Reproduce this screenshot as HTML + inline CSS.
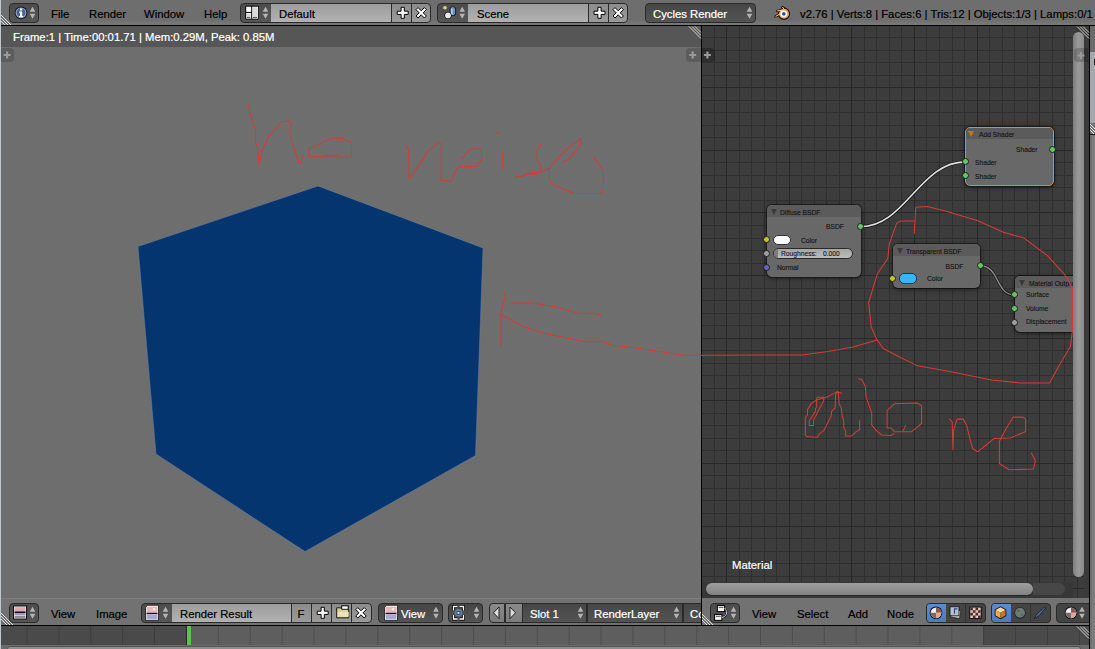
<!DOCTYPE html>
<html><head><meta charset="utf-8">
<style>
*{box-sizing:border-box;margin:0;padding:0}
html,body{width:1095px;height:649px;overflow:hidden;background:#727272;font-family:"Liberation Sans",sans-serif;font-size:11.3px;color:#000}
.a{position:absolute}
.t{position:absolute;white-space:nowrap;line-height:1;-webkit-text-stroke:0.2px currentColor}
.menu{position:absolute;border-radius:4px;background:linear-gradient(#4c4c4c,#555);border:1px solid #2a2a2a}
.fld{position:absolute;background:linear-gradient(#9d9d9d,#b2b2b2);border-top:1px solid #2a2a2a;border-bottom:1px solid #2a2a2a}
.btn{position:absolute;background:linear-gradient(#8c8c8c,#9a9a9a);border:1px solid #2a2a2a}
.dk{position:absolute;border-radius:4px;background:linear-gradient(#464646,#545454);border:1px solid #2a2a2a;color:#fff}
</style></head><body>

<!-- left strip -->
<div class="a" style="left:0;top:0;width:1px;height:649px;background:#bfc6cc"></div>

<!-- ===== TOP HEADER ===== -->
<div class="a" style="left:1px;top:0;width:1094px;height:25px;background:linear-gradient(#6e6e6e 0,#6e6e6e 20px,#787878 24px)"></div>
<div class="a" style="left:1px;top:25px;width:1094px;height:1px;background:#000"></div>

<!-- info editor menu button -->
<div class="menu" style="left:9px;top:3px;width:30px;height:20px"></div>
<div class="t" style="left:51px;top:9px">File</div>
<div class="t" style="left:89px;top:9px">Render</div>
<div class="t" style="left:144px;top:9px">Window</div>
<div class="t" style="left:204px;top:9px">Help</div>

<!-- layout -->
<div class="menu" style="left:240px;top:3px;width:36px;height:20px;border-radius:4px 0 0 4px"></div>
<div class="fld" style="left:271px;top:3px;width:121px;height:20px"></div>
<div class="t" style="left:279px;top:9px">Default</div>
<div class="btn" style="left:391px;top:3px;width:21px;height:20px"></div>
<div class="btn" style="left:411px;top:3px;width:20px;height:20px;border-radius:0 4px 4px 0"></div>

<!-- scene -->
<div class="menu" style="left:437px;top:3px;width:36px;height:20px;border-radius:4px 0 0 4px"></div>
<div class="fld" style="left:468px;top:3px;width:121px;height:20px"></div>
<div class="t" style="left:477px;top:9px">Scene</div>
<div class="btn" style="left:588px;top:3px;width:21px;height:20px"></div>
<div class="btn" style="left:608px;top:3px;width:20px;height:20px;border-radius:0 4px 4px 0"></div>

<!-- render engine -->
<div class="dk" style="left:645px;top:3px;width:111px;height:20px"></div>
<div class="t" style="left:653px;top:9px;color:#fff">Cycles Render</div>

<div class="t" style="left:800px;top:9px">v2.76 | Verts:8 | Faces:6 | Tris:12 | Objects:1/3 | Lamps:0/1</div>

<svg class="a" style="left:0;top:0" width="1095" height="26">
 <defs>
  <g id="ud"><path d="M-2.8,-1 L0,-6 L2.8,-1Z M-2.8,1 L0,6 L2.8,1Z" fill="#b4b4b4"/></g>
  <g id="plus"><path d="M-1.6,-5.5 h3.2 v3.9 h3.9 v3.2 h-3.9 v3.9 h-3.2 v-3.9 h-3.9 v-3.2 h3.9Z" fill="#fff" stroke="#000" stroke-width="1"/></g>
  <g id="cross"><path d="M-5.2,-3.2 L-3.2,-5.2 L0,-2 L3.2,-5.2 L5.2,-3.2 L2,0 L5.2,3.2 L3.2,5.2 L0,2 L-3.2,5.2 L-5.2,3.2 L-2,0Z" fill="#fff" stroke="#000" stroke-width="1"/></g>
 </defs>
 <!-- info icon -->
 <circle cx="21" cy="12.8" r="6.4" fill="#10182a"/>
 <circle cx="21" cy="12.8" r="5.4" fill="#a8b8d0"/>
 <circle cx="21" cy="12.8" r="4.5" fill="#46648f"/>
 <rect x="20" y="8.5" width="2.2" height="2" fill="#fff"/>
 <path d="M19.2,11.5 h3 v4.4 h1 v1.2 h-4.2 v-1.2 h1 v-3.2 h-0.8Z" fill="#fff"/>
 <use href="#ud" x="32.5" y="12.8"/>
 <!-- layout icon -->
 <rect x="245.3" y="5.8" width="13.6" height="13.8" rx="1" fill="#000"/>
 <rect x="246.2" y="6.7" width="5" height="5.2" fill="#fafafa"/>
 <rect x="246.2" y="12.9" width="5" height="5.8" fill="#f4f4f4"/>
 <rect x="252.2" y="6.7" width="5.9" height="12" fill="#f4f4f4"/>
 <rect x="252.9" y="7.4" width="4.5" height="9.6" fill="#d8d8d8"/>
 <rect x="246.9" y="13.6" width="3.6" height="3.4" fill="#d8d8d8"/>
 <rect x="247" y="17.2" width="3.2" height="0.8" fill="#333"/>
 <rect x="253" y="17.2" width="4.2" height="0.8" fill="#333"/>
 <use href="#ud" x="265.5" y="12.8"/>
 <use href="#plus" x="402.7" y="12.8"/>
 <use href="#cross" x="421.2" y="12.8"/>
 <!-- scene icon -->
 <circle cx="445" cy="7.8" r="1.8" fill="#e8e890" opacity=".9"/>
 <rect x="449.6" y="6.4" width="6.4" height="9.6" rx="3" fill="#101010"/>
 <rect x="450.4" y="7" width="4.8" height="8.4" rx="2.4" fill="#7090c8"/>
 <rect x="451" y="8.6" width="1.6" height="6" fill="#b8cce8"/>
 <circle cx="448" cy="15.4" r="3.6" fill="#101010"/>
 <circle cx="448" cy="15.4" r="2.9" fill="#e8e8e8"/>
 <use href="#ud" x="462.2" y="12.8"/>
 <use href="#plus" x="599.5" y="12.8"/>
 <use href="#cross" x="618.2" y="12.8"/>
 <use href="#ud" x="749.5" y="12.8"/>
 <!-- blender logo -->
 <g stroke="#22140a" stroke-width="1.1" stroke-linejoin="round" fill="#e4a060">
  <path d="M787.5,9.5 L782.6,6.4 L781.6,7.4 L783,9.8 L777,10.2 L776.4,11.2 L780.6,12.4 L774.8,16.2 L775,17.2 L781,15.5Z"/>
  <circle cx="784" cy="13.8" r="5.6"/>
 </g>
 <path d="M777.2,10.8 L782.5,10.2 M775.6,16.5 L780.5,13.4 M782.3,7.3 L784,9" stroke="#f4d0a8" stroke-width=".9"/>
 <circle cx="783.8" cy="13.8" r="3.4" fill="#fff"/>
 <circle cx="783.8" cy="13.8" r="1.9" fill="#3a5590"/>
</svg>

<!-- ===== IMAGE EDITOR ===== -->
<div class="a" style="left:1px;top:26px;width:700px;height:21px;background:#565656"></div>
<div class="t" style="left:13px;top:32px;color:#fff">Frame:1 | Time:00:01.71 | Mem:0.29M, Peak: 0.85M</div>
<div class="a" style="left:1px;top:47px;width:700px;height:552px;background:#6e6e6e"></div>

<svg class="a" style="left:0;top:0" width="1095" height="649">
  <polygon points="318,186 483,248 475.5,455.5 305,551.5 156,454 138,246.5" fill="#04356f" stroke="rgba(110,135,170,.45)" stroke-width="1" stroke-linejoin="miter"/>
</svg>

<!-- divider -->
<div class="a" style="left:701px;top:26px;width:1px;height:599px;background:#000"></div>

<!-- ===== NODE EDITOR ===== -->
<div class="a" style="left:702px;top:26px;width:387px;height:572px;background:#3c3c3c"></div>
<svg class="a" style="left:0;top:0" width="1095" height="649" shape-rendering="crispEdges">
 <path d="M714.5,26V598M739.5,26V598M751.5,26V598M764.5,26V598M776.5,26V598M801.5,26V598M814.5,26V598M826.5,26V598M839.5,26V598M864.5,26V598M876.5,26V598M889.5,26V598M901.5,26V598M926.5,26V598M939.5,26V598M952.5,26V598M964.5,26V598M989.5,26V598M1002.5,26V598M1014.5,26V598M1027.5,26V598M1052.5,26V598M1064.5,26V598M1077.5,26V598M702,37.5H1089M702,50.5H1089M702,62.5H1089M702,75.5H1089M702,100.5H1089M702,112.5H1089M702,125.5H1089M702,137.5H1089M702,162.5H1089M702,175.5H1089M702,187.5H1089M702,200.5H1089M702,225.5H1089M702,238.5H1089M702,250.5H1089M702,263.5H1089M702,288.5H1089M702,300.5H1089M702,313.5H1089M702,325.5H1089M702,350.5H1089M702,363.5H1089M702,375.5H1089M702,388.5H1089M702,413.5H1089M702,425.5H1089M702,438.5H1089M702,450.5H1089M702,475.5H1089M702,488.5H1089M702,500.5H1089M702,513.5H1089M702,538.5H1089M702,551.5H1089M702,563.5H1089M702,576.5H1089" stroke="#2f2f2f" stroke-width="1"/>
 <path d="M726.5,26V598M789.5,26V598M851.5,26V598M914.5,26V598M977.5,26V598M1039.5,26V598M702,87.5H1089M702,150.5H1089M702,212.5H1089M702,275.5H1089M702,338.5H1089M702,400.5H1089M702,463.5H1089M702,526.5H1089M702,588.5H1089" stroke="#282828" stroke-width="1"/>
</svg>
<div class="a" style="left:1084px;top:26px;width:5px;height:572px;background:#3a3a3a"></div>


<!-- nodes -->
<style>
.node{position:absolute;background:#686868;border-radius:5px;box-shadow:0 0 0 1px rgba(0,0,0,.35),0 1px 5px rgba(0,0,0,.6);overflow:hidden}
.nh{position:absolute;left:0;top:0;right:0;background:#5b5b5b}
.nt{position:absolute;white-space:nowrap;line-height:1;font-size:6.7px;margin-top:0.6px;color:#111;-webkit-text-stroke:0.1px #111}
.sock{position:absolute;width:7px;height:7px;border-radius:50%;border:1px solid #1e1e1e;margin:-0.5px 0 0 -0.5px}
.tri{position:absolute;width:0;height:0;border-left:3.5px solid transparent;border-right:3.5px solid transparent;border-top:6px solid #3a3a3a}
</style>
<svg class="a" style="left:0;top:0" width="1095" height="649">
  <path d="M860.7,226.7 C905,226.7 920,161.9 965.2,161.9" stroke="#1a1a1a" stroke-width="3.2" fill="none"/>
  <path d="M860.7,226.7 C905,226.7 920,161.9 965.2,161.9" stroke="#e0e0e0" stroke-width="1.6" fill="none"/>
  <path d="M980,265.7 C1000,265.7 995,294.9 1014.7,294.9" stroke="#1a1a1a" stroke-width="3" fill="none"/>
  <path d="M980,265.7 C1000,265.7 995,294.9 1014.7,294.9" stroke="#8a8a8a" stroke-width="1.4" fill="none"/>
</svg>

<div class="node" style="left:767px;top:205px;width:94px;height:72px">
  <div class="nh" style="height:12px"></div>
</div>
<div class="tri" style="left:771px;top:209px"></div>
<div class="nt" style="left:780px;top:209px">Diffuse BSDF</div>
<div class="nt" style="left:826px;top:223.5px">BSDF</div>
<div class="a" style="left:772.7px;top:234.8px;width:18px;height:10.6px;border-radius:5px;background:#fafafe;border:1px solid #333"></div>
<div class="nt" style="left:801px;top:237px">Color</div>
<div class="a" style="left:772.7px;top:248.3px;width:80px;height:11px;border-radius:5.5px;background:linear-gradient(#a6a6a6,#bcbcbc);border:1px solid #2a2a2a"></div>
<div class="a" style="left:774px;top:249.3px;width:4px;height:9px;border-radius:4px 0 0 4px;background:#7a7a7a"></div>
<div class="nt" style="left:781px;top:250.8px">Roughness:</div>
<div class="nt" style="left:823px;top:250.8px">0.000</div>
<div class="nt" style="left:777px;top:264px">Normal</div>
<div class="sock" style="left:857.7px;top:223.7px;background:#63c763"></div>
<div class="sock" style="left:763.8px;top:236.7px;background:#c7c729"></div>
<div class="sock" style="left:763.8px;top:250.6px;background:#a1a1a1"></div>
<div class="sock" style="left:763.8px;top:264.2px;background:#6363c7"></div>

<div class="node" style="left:965px;top:127px;width:89px;height:59px;border:1.5px solid #d28c46">
  <div class="nh" style="height:11px"></div>
</div>
<div class="tri" style="left:968px;top:131px;border-top-color:#d0701c"></div>
<div class="nt" style="left:979px;top:131.5px">Add Shader</div>
<div class="nt" style="left:1016px;top:146.5px">Shader</div>
<div class="nt" style="left:975px;top:159.5px">Shader</div>
<div class="nt" style="left:975px;top:173.5px">Shader</div>
<div class="sock" style="left:1049.9px;top:146.2px;background:#63c763"></div>
<div class="sock" style="left:962.2px;top:158.9px;background:#63c763"></div>
<div class="sock" style="left:962.2px;top:172.4px;background:#63c763"></div>

<div class="node" style="left:893px;top:243.5px;width:87px;height:44px">
  <div class="nh" style="height:12px"></div>
</div>
<div class="tri" style="left:897px;top:248px"></div>
<div class="nt" style="left:906px;top:248px">Transparent BSDF</div>
<div class="nt" style="left:945.5px;top:263.5px">BSDF</div>
<div class="a" style="left:898.6px;top:273.4px;width:18px;height:11px;border-radius:5px;background:#3cb4fa;border:1px solid #1a3550"></div>
<div class="nt" style="left:927px;top:275.5px">Color</div>
<div class="sock" style="left:977px;top:262.7px;background:#63c763"></div>
<div class="sock" style="left:889.6px;top:275.3px;background:#c7c729"></div>

<div class="a" style="left:702px;top:26px;width:371px;height:572px;overflow:hidden">
  <div class="node" style="left:313px;top:250px;width:90px;height:56px">
    <div class="nh" style="height:12px"></div>
  </div>
</div>
<div class="tri" style="left:1019px;top:280px"></div>
<div class="nt" style="left:1029px;top:280px;width:44px;overflow:hidden">Material Output</div>
<div class="nt" style="left:1026px;top:291.5px">Surface</div>
<div class="nt" style="left:1026px;top:305px">Volume</div>
<div class="nt" style="left:1026px;top:318.5px">Displacement</div>
<div class="sock" style="left:1011.7px;top:291.9px;background:#63c763"></div>
<div class="sock" style="left:1011.7px;top:305.4px;background:#63c763"></div>
<div class="sock" style="left:1011.7px;top:319.2px;background:#a1a1a1"></div>

<!-- node editor scrollbars -->
<div class="a" style="left:1073px;top:32px;width:11px;height:545px;border-radius:5.5px;background:linear-gradient(90deg,#7d7d7d,#9a9a9a 50%,#8a8a8a)"></div>
<div class="a" style="left:702px;top:582px;width:371px;height:16px;background:#373737"></div>
<div class="a" style="left:706px;top:583px;width:327px;height:12px;border-radius:6px;background:linear-gradient(#9e9e9e,#828282);box-shadow:0 1px 0 #262626"></div>
<div class="a" style="left:1033px;top:583px;width:32px;height:12px;border-radius:0 6px 6px 0;background:#474747"></div>
<div class="t" style="left:732px;top:560px;color:#fff">Material</div>

<!-- annotations -->
<svg class="a" style="left:0;top:0" width="1095" height="649"><g fill="none" stroke="#d63a3a" stroke-width="1.05" stroke-linejoin="round" stroke-linecap="round">
<polyline points="248.9,104.2 249.2,111 252.3,120.9 255.4,128.3 255.4,141.8 257.9,149.2 259.1,165.2 261.6,152.3 269,135.7 277,127.7 281.3,121.5 289.3,120.9 291.1,124 291.1,140 294.2,149.2 299.1,162.8 301.6,162.2 301.6,157.8 303.5,155.4"/>
<polyline points="309,156.6 309,148 313.9,146.8 326.3,140.6 332.4,138.1 343.5,138.7 351.5,143.1 351.5,157.2 309,156.6"/>
<polyline points="325,155.6 340,155.2"/>
<polyline points="405.5,145.3 408.6,149.6 409.2,179.1 424.6,157 425.8,153.3 438.1,142.8 441.2,143.4 441.2,180.4 451.1,181 456.6,168.7 459.7,166.8 476.9,166.2 481.9,159.4 481.2,149 471.4,149 467.7,151.4 462.1,158.8"/>
<polyline points="495.4,132.9 499.7,132.9"/>
<polyline points="502.8,151.4 502.8,169.3"/>
<polyline points="541.3,143.6 537,149.7 537,159.6 541.3,167 540.7,171.9 535.7,174.4 528.3,173.7 522.2,176.2 514.8,177.4"/>
<polyline points="514.8,177.4 523,175.4 530,173 536,172.5 540.7,171.9"/>
<polyline points="540.7,171.9 549.3,168.2 553,163.3 569,147.2 580.7,138.6 581.3,142.3 578.8,147.2 570.2,157.7 562.8,162.6"/>
<polyline points="549.3,168.2 549.3,180.5 554.2,185.4 573.9,193.4 601,193.4 603.5,189.1 603.5,170.7 593.6,157.1"/>
<polyline points="505.1,291.1 505.1,298.1 503.1,304.1 501.1,312.1 501.1,346.3"/>
<polyline points="511.1,303.1 532.2,303.1 556.3,307.1 578.4,313.2 594.5,313.2 601.5,315.2"/>
<polyline points="501.1,314.2 522.1,326.2 544.2,333.2 582.4,341.3 601.5,341.3 612.6,345.3 630.6,347.3 664.8,352.3 682.9,355.3 701,355.3 803.2,354.9 812.7,353.6 828.1,351.6 853,346.9 870.3,342 877,340.1"/>
<polyline points="914.2,233.7 915.7,207.3 927.4,206.4 947.9,211.7 962.9,216.3 977.2,220.5 1003.5,232.2 1024,238.1 1047.5,255.7 1064.9,274.8 1068.6,281 1072.3,288.3 1072.5,330 1070.4,346.6 1058,367.5 1049.6,382.9 1020.5,382.9 991.4,380 949.7,371.6 916.4,365.4 895.6,355 883.7,348.8 877,340.1 871.2,326.7 868.6,302.5 877.6,273.2 887.8,258.6 889.3,243.9 896.6,223.4 901,220.9 914.3,220.9"/>
<polyline points="837.3,391.6 828.1,396.4 816.7,399.9 811.4,403.4 807.5,409.6 807.5,414.9 805.3,417.5 805.3,435.1 807.5,436.8 817.6,437.3 818.9,434.2 823.7,430.7 826.4,425.4 831.2,415.7 831.6,411.4 835.1,407.8 835.6,394.7 837.3,391.6"/>
<polyline points="809.2,425.4 813.6,425.4 813.6,420.1 816.7,414 823.7,400.8 823.7,397.3 817.6,397.3 816.7,398.2 816.7,407 815.4,408.3 815.4,411.4 809.2,421 809.2,425.4"/>
<polyline points="841.7,393.3 836.9,391.6 838.6,393.3 839.1,403.9 841.3,407.8 842.2,416.6 843.5,419.3 843.9,428 845.7,430.7 845.7,435.9 851.8,435.9 856.2,431.6 859.7,429.8 859.7,420.6"/>
<polyline points="858.8,378.5 862.1,380 865.3,386.4 866,396.6 871.7,413.2 871.7,424.8 876.8,431.1 881.9,435 890.9,435.6 894.1,433.7"/>
<polyline points="887.1,427.9 887.1,410.7 894.7,403.7 917.1,403 921.6,405.6 921.6,423.5 911.4,431.8 894.7,431.8 890.9,427.9 887.1,427.9"/>
<polyline points="903,431.1 905.7,425.4"/>
<polyline points="949.4,419.1 952.2,421.9 952.9,449.7 953.6,430.2 957.1,419.1 963.3,419.1 966.8,426.1 970.9,442.7 973,449 977.9,451.7 985.5,445.5 993.8,438.6 1010.5,437.9 1025.7,431.6 1025.7,419.1 1023,417.1 1013.2,417.1 1005.6,429.5 999.4,441.3 999.4,463.5 1009.1,469.8 1033.4,469.1 1035.4,460.8 1031.3,453.1"/>
</g></svg>

<!-- ===== BOTTOM HEADERS ===== -->
<div class="a" style="left:1px;top:598px;width:700px;height:27px;background:#727272;border-top:1px solid #7e7e7e"></div>
<div class="a" style="left:702px;top:598px;width:387px;height:27px;background:#727272"></div>
<div class="a" style="left:1px;top:625px;width:1088px;height:1px;background:#000"></div>

<div class="menu" style="left:9px;top:603px;width:30px;height:20px"></div>
<div class="t" style="left:51px;top:609px">View</div>
<div class="t" style="left:96px;top:609px">Image</div>
<div class="menu" style="left:141px;top:603px;width:36px;height:20px;border-radius:4px 0 0 4px"></div>
<div class="fld" style="left:171.5px;top:603px;width:120.5px;height:20px"></div>
<div class="t" style="left:180px;top:609px">Render Result</div>
<div class="btn" style="left:291px;top:603px;width:21px;height:20px"></div>
<div class="t" style="left:297.5px;top:609px">F</div>
<div class="btn" style="left:311px;top:603px;width:21px;height:20px"></div>
<div class="btn" style="left:331px;top:603px;width:21px;height:20px"></div>
<div class="btn" style="left:351px;top:603px;width:21px;height:20px;border-radius:0 4px 4px 0"></div>

<div class="dk" style="left:377.5px;top:603px;width:65.5px;height:20px"></div>
<div class="t" style="left:401px;top:609px;color:#fff">View</div>
<div class="dk" style="left:448px;top:603px;width:35px;height:20px"></div>
<div class="btn" style="left:489px;top:603px;width:16px;height:20px;border-radius:4px 0 0 4px;background:linear-gradient(#8a8a8a,#7c7c7c)"></div>
<div class="btn" style="left:504.5px;top:603px;width:18px;height:20px;background:linear-gradient(#8a8a8a,#7c7c7c)"></div>
<div class="dk" style="left:522px;top:603px;width:65px;height:20px;border-radius:0"></div>
<div class="t" style="left:530px;top:609px;color:#fff">Slot 1</div>
<div class="dk" style="left:586.5px;top:603px;width:96.5px;height:20px;border-radius:0"></div>
<div class="t" style="left:594px;top:609px;color:#fff">RenderLayer</div>
<div class="dk" style="left:682.5px;top:603px;width:30px;height:20px;border-radius:0"></div>
<div class="t" style="left:690px;top:609px;color:#fff">Combined</div>
<div class="a" style="left:701px;top:598px;width:1px;height:28px;background:#000"></div>
<div class="a" style="left:702px;top:598px;width:387px;height:27px;background:#727272"></div>

<div class="menu" style="left:710px;top:603px;width:30px;height:20px"></div>
<div class="t" style="left:752px;top:609px">View</div>
<div class="t" style="left:797px;top:609px">Select</div>
<div class="t" style="left:848px;top:609px">Add</div>
<div class="t" style="left:887px;top:609px">Node</div>

<div class="dk" style="left:926px;top:603px;width:60px;height:20px;background:#444"></div>
<div class="a" style="left:927px;top:604px;width:19px;height:18px;border-radius:3px 0 0 3px;background:linear-gradient(#5f8ad0,#4f7ac0)"></div>
<div class="a" style="left:965px;top:604px;width:1px;height:18px;background:#333"></div>
<div class="dk" style="left:991px;top:603px;width:60px;height:20px;background:#444"></div>
<div class="a" style="left:992px;top:604px;width:19px;height:18px;border-radius:3px 0 0 3px;background:linear-gradient(#5f8ad0,#4f7ac0)"></div>
<div class="a" style="left:1030px;top:604px;width:1px;height:18px;background:#333"></div>
<div class="dk" style="left:1056px;top:603px;width:40px;height:20px;background:#444"></div>

<svg class="a" style="left:0;top:598px" width="1095" height="28" viewBox="0 598 1095 28">
 <defs>
  <g id="ud2"><path d="M-2.8,-1 L0,-6 L2.8,-1Z M-2.8,1 L0,6 L2.8,1Z" fill="#b4b4b4"/></g>
  <g id="plus2"><path d="M-1.6,-5.5 h3.2 v3.9 h3.9 v3.2 h-3.9 v3.9 h-3.2 v-3.9 h-3.9 v-3.2 h3.9Z" fill="#fff" stroke="#000" stroke-width="1"/></g>
  <g id="cross2"><path d="M-5.2,-3.2 L-3.2,-5.2 L0,-2 L3.2,-5.2 L5.2,-3.2 L2,0 L5.2,3.2 L3.2,5.2 L0,2 L-3.2,5.2 L-5.2,3.2 L-2,0Z" fill="#fff" stroke="#000" stroke-width="1"/></g>
  <g id="img"><path d="M-6.5,-5 L-4.5,-7.5 L6.5,-7.5 L6.5,7.5 L-6.5,7.5Z" fill="#fff" stroke="#111" stroke-width=".8"/>
   <rect x="-5.5" y="-6.2" width="11" height="6.5" fill="#e8b8b8"/><rect x="-5.5" y="0" width="11" height="1.4" fill="#201418"/><rect x="-5.5" y="1.4" width="11" height="5" fill="#a8a8d8"/><circle cx="2" cy="-3.5" r="1.2" fill="#fff4e8"/></g>
 </defs>
 <!-- image editor icon -->
 <rect x="13" y="605.5" width="14" height="14" fill="#111"/>
 <rect x="14" y="606.5" width="12" height="12" fill="#fafafa"/>
 <rect x="14.5" y="607.2" width="11" height="5" fill="#e0a8a8"/>
 <rect x="14.5" y="611.5" width="11" height="1.5" fill="#181018"/>
 <rect x="14.5" y="613" width="11" height="2.5" fill="#9898c8"/>
 <rect x="14.5" y="616.5" width="11" height="1" fill="#222"/>
 <use href="#ud2" x="32.5" y="612.8"/>
 <use href="#img" x="152" y="612.8"/>
 <use href="#ud2" x="165.5" y="612.8"/>
 <use href="#plus2" x="322.7" y="612.8"/>
 <g transform="translate(342.7,612.8)">
  <rect x="-1" y="-7" width="6.5" height="6" fill="#fff" stroke="#000" stroke-width="1"/>
  <path d="M-6,-5 h4 l1,1.5 h7 v8.5 h-12Z" fill="#d8d0a0" stroke="#1a1a10" stroke-width="1"/>
  <path d="M-5,-1 h11 v5 h-11Z" fill="#ece4b8"/>
 </g>
 <use href="#cross2" x="361" y="612.8"/>
 <use href="#img" x="391" y="612.8"/>
 <use href="#ud2" x="436" y="612.8"/>
 <!-- pivot -->
 <g fill="none" stroke="#000" stroke-width="2.8"><path d="M453.5,610.5 v-4 h4 M459.5,606.5 h4 v4 M463.5,615 v4 h-4 M457.5,619 h-4 v-4"/></g>
 <g fill="none" stroke="#fff" stroke-width="1.3"><path d="M453.5,610.5 v-4 h4 M459.5,606.5 h4 v4 M463.5,615 v4 h-4 M457.5,619 h-4 v-4"/></g>
 <circle cx="458.5" cy="612.8" r="3.8" fill="#6d7c98"/>
 <rect x="456.7" y="611" width="3.6" height="3.6" fill="#1a3c7a"/>
 <rect x="457.5" y="611.8" width="2" height="2" fill="#c8f0ff"/>
 <use href="#ud2" x="476.5" y="612.8"/>
 <path d="M499,607 L493.5,612.8 L499,618.6Z" fill="#ddd" stroke="#111" stroke-width=".9"/>
 <path d="M510,607 L515.5,612.8 L510,618.6Z" fill="#ddd" stroke="#111" stroke-width=".9"/>
 <use href="#ud2" x="580.5" y="612.8"/>
 <use href="#ud2" x="676.5" y="612.8"/>
 <!-- node editor icon -->
 <g transform="translate(0,0)">
  <path d="M724,609 C728,609 728,617.5 721,617.5" fill="none" stroke="#1e2a40" stroke-width="2.2"/>
  <path d="M724,609 C728,609 728,617.5 721,617.5" fill="none" stroke="#c0d0e8" stroke-width="1"/>
  <rect x="717.3" y="605.4" width="7.3" height="6.2" fill="#f4f4f4" stroke="#000" stroke-width="1"/>
  <rect x="718.6" y="606.8" width="4.8" height=".9" fill="#333"/>
  <rect x="714.6" y="614.4" width="7.3" height="6" fill="#f4f4f4" stroke="#000" stroke-width="1"/>
  <rect x="715.9" y="615.8" width="4.8" height=".9" fill="#333"/>
  <circle cx="725" cy="608.5" r=".8" fill="#d0a040"/><circle cx="722.3" cy="617.5" r=".8" fill="#d0a040"/>
 </g>
 <use href="#ud2" x="733.5" y="612.8"/>
 <!-- shader type icons -->
 <g transform="translate(936,612.8)">
  <circle r="6.3" fill="#0a0f1e"/><circle r="5.4" fill="#e8e8e8"/>
  <path d="M0,0 L0,-5.4 A5.4,5.4 0 0 1 5.4,0Z" fill="#8a5a50"/><path d="M0,0 L5.4,0 A5.4,5.4 0 0 1 0,5.4Z" fill="#e0a898"/><path d="M0,0 L0,5.4 A5.4,5.4 0 0 1 -5.4,0Z" fill="#7a6a68"/><circle cx="-2" cy="-2" r="1.6" fill="#fff" opacity=".7"/>
 </g>
 <g transform="translate(955.5,612.8)">
  <rect x="-4" y="-3" width="9" height="8" fill="#cfcfcf" stroke="#222" stroke-width=".8" transform="rotate(10)"/>
  <rect x="-5.5" y="-6" width="9" height="9" fill="#b8c0c8" stroke="#111" stroke-width=".8"/>
  <path d="M-1,1 v-5 h3" fill="none" stroke="#2a4a8a" stroke-width="1.2"/>
 </g>
 <g transform="translate(975.5,612.8)">
  <rect x="-6.3" y="-6.3" width="12.6" height="12.6" fill="#1a1a1a"/>
  <rect x="-5.2" y="-5.2" width="10.4" height="10.4" fill="#d8ccc4"/>
  <path d="M-5.2,-5.2h2.6v2.6h-2.6Z M0,-5.2h2.6v2.6H0Z M-2.6,-2.6h2.6v2.6h-2.6Z M2.6,-2.6h2.6v2.6h-2.6Z M-5.2,0h2.6v2.6h-2.6Z M0,0h2.6v2.6H0Z M-2.6,2.6h2.6v2.6h-2.6Z M2.6,2.6h2.6v2.6h-2.6Z" fill="#5e2424"/>
 </g>
 <g transform="translate(1000.5,612.8)">
  <path d="M0,-6.5 L5.8,-3.3 L5.8,3.3 L0,6.5 L-5.8,3.3 L-5.8,-3.3Z" fill="#111"/>
  <path d="M0,-5.5 L5,-2.8 L0,0 L-5,-2.8Z" fill="#ffd8a0"/>
  <path d="M-5,-2.8 L0,0 L0,5.5 L-5,2.8Z" fill="#f0a850"/>
  <path d="M5,-2.8 L0,0 L0,5.5 L5,2.8Z" fill="#c87828"/>
 </g>
 <g transform="translate(1020,612.8)">
  <circle r="5.8" fill="#202020"/><circle r="5" fill="#6a7a78"/>
  <path d="M-3,-3 q2,-1 3,1 q-1,2 -3,1Z M1,1 q2,0 3,2 q-2,1 -3,-1Z" fill="#5a6a4a"/>
 </g>
 <g transform="translate(1040,612.8)">
  <path d="M-6,6 L-3,1 L5,-6 L6,-5 L-1,3Z" fill="#4a6a9a" stroke="#1a1a2a" stroke-width=".8"/>
 </g>
 <g transform="translate(1071,612.8)">
  <circle r="6.3" fill="#0a0f1e"/><circle r="5.4" fill="#e8e8e8"/>
  <path d="M0,0 L0,-5.4 A5.4,5.4 0 0 1 5.4,0Z" fill="#8a5a50"/><path d="M0,0 L5.4,0 A5.4,5.4 0 0 1 0,5.4Z" fill="#e0a898"/><path d="M0,0 L0,5.4 A5.4,5.4 0 0 1 -5.4,0Z" fill="#7a6a68"/><circle cx="-2" cy="-2" r="1.6" fill="#fff" opacity=".7"/>
 </g>
 <use href="#ud2" x="1082" y="612.8"/>
</svg>

<!-- ===== TIMELINE ===== -->
<div class="a" style="left:1px;top:626px;width:1088px;height:19px;background:#5e5e5e"></div>
<div class="a" style="left:1px;top:626px;width:186px;height:19px;background:#4a4a4a"></div>
<div class="a" style="left:983px;top:626px;width:106px;height:19px;background:#4a4a4a"></div>
<div class="a" style="left:1px;top:626px;width:1088px;height:19px;background-image:linear-gradient(90deg,rgba(0,0,0,.18) 1px,transparent 1px);background-size:31.9px 19px;background-position:25.5px 0"></div>
<div class="a" style="left:186px;top:626px;width:1px;height:19px;background:#2a2a2a"></div>
<div class="a" style="left:187px;top:626px;width:4px;height:19px;background:#5ec24a"></div>
<div class="a" style="left:1px;top:645px;width:1088px;height:4px;background:#6a6a6a"></div>
<div class="a" style="left:7px;top:646px;width:1074px;height:6px;border-radius:4px;background:#8e8e8e;border:1px solid #555"></div>

<!-- right border strip -->
<div class="a" style="left:1089px;top:26px;width:1px;height:623px;background:#000"></div>
<div class="a" style="left:1090px;top:26px;width:5px;height:623px;background:#727272"></div>
<div class="a" style="left:1092px;top:135px;width:3px;height:514px;background:#7c7c7c"></div>
<div class="a" style="left:1090px;top:26px;width:5px;height:26px;background:#6a6a6a"></div>
<div class="a" style="left:1090px;top:52px;width:5px;height:71px;background:#a4a8ac"></div>
<div class="a" style="left:1094px;top:59px;width:1px;height:6px;background:#222"></div>
<div class="a" style="left:1090px;top:134px;width:5px;height:1px;background:#111"></div>
<svg class="a" style="left:1090px;top:123px" width="5" height="11"><path d="M0,1 L5,6 M0,4 L5,9 M0,7 L4,11" stroke="#eee" stroke-width="1"/></svg>

<!-- plus tabs -->
<div class="a" style="left:1px;top:47.5px;width:13px;height:14px;border-radius:0 4px 4px 0;background:rgba(0,0,0,.16)"></div>
<div class="a" style="left:686px;top:47.5px;width:15px;height:14px;border-radius:4px 0 0 4px;background:rgba(0,0,0,.16)"></div>
<div class="a" style="left:702px;top:47.5px;width:13px;height:14px;border-radius:0 4px 4px 0;background:rgba(0,0,0,.25)"></div>
<div class="a" style="left:1074px;top:48px;width:14px;height:14px;border-radius:4px 0 0 4px;background:rgba(0,0,0,.18)"></div>
<svg class="a" style="left:0;top:0" width="1095" height="649">
 <g fill="#9a9a9a">
  <path d="M6,51.5h2.2v2.4h2.4v2.2h-2.4v2.4h-2.2v-2.4h-2.4v-2.2h2.4Z"/>
  <path d="M691.6,51.5h2.2v2.4h2.4v2.2h-2.4v2.4h-2.2v-2.4h-2.4v-2.2h2.4Z"/>
  <path d="M706.3,51.5h2.2v2.4h2.4v2.2h-2.4v2.4h-2.2v-2.4h-2.4v-2.2h2.4Z"/>
  <path d="M1079.8,52h2.2v2.4h2.4v2.2h-2.4v2.4h-2.2v-2.4h-2.4v-2.2h2.4Z"/>
 </g>
 <!-- corner hatches -->
 <g stroke="#fff" stroke-width="0.9" opacity=".85">
  <path d="M1,18 L8,25 M1,21 L5,25 M1,15 L11,25"/>
  <path d="M689,26.5 L701,38.5 M692,26.5 L701,35.5 M695,26.5 L701,32.5"/>
  <path d="M1077,26.5 L1089,38.5 M1080,26.5 L1089,35.5 M1083,26.5 L1089,32.5"/>
  <path d="M1,616 L10,625 M1,619 L7,625 M1,613 L13,625"/>
  <path d="M702,614 L713,625 M702,617 L710,625 M702,620 L707,625"/>
  <path d="M1077,626.5 L1089,638.5 M1080,626.5 L1089,635.5 M1083,626.5 L1089,632.5"/>
 </g>
</svg>
</body></html>
